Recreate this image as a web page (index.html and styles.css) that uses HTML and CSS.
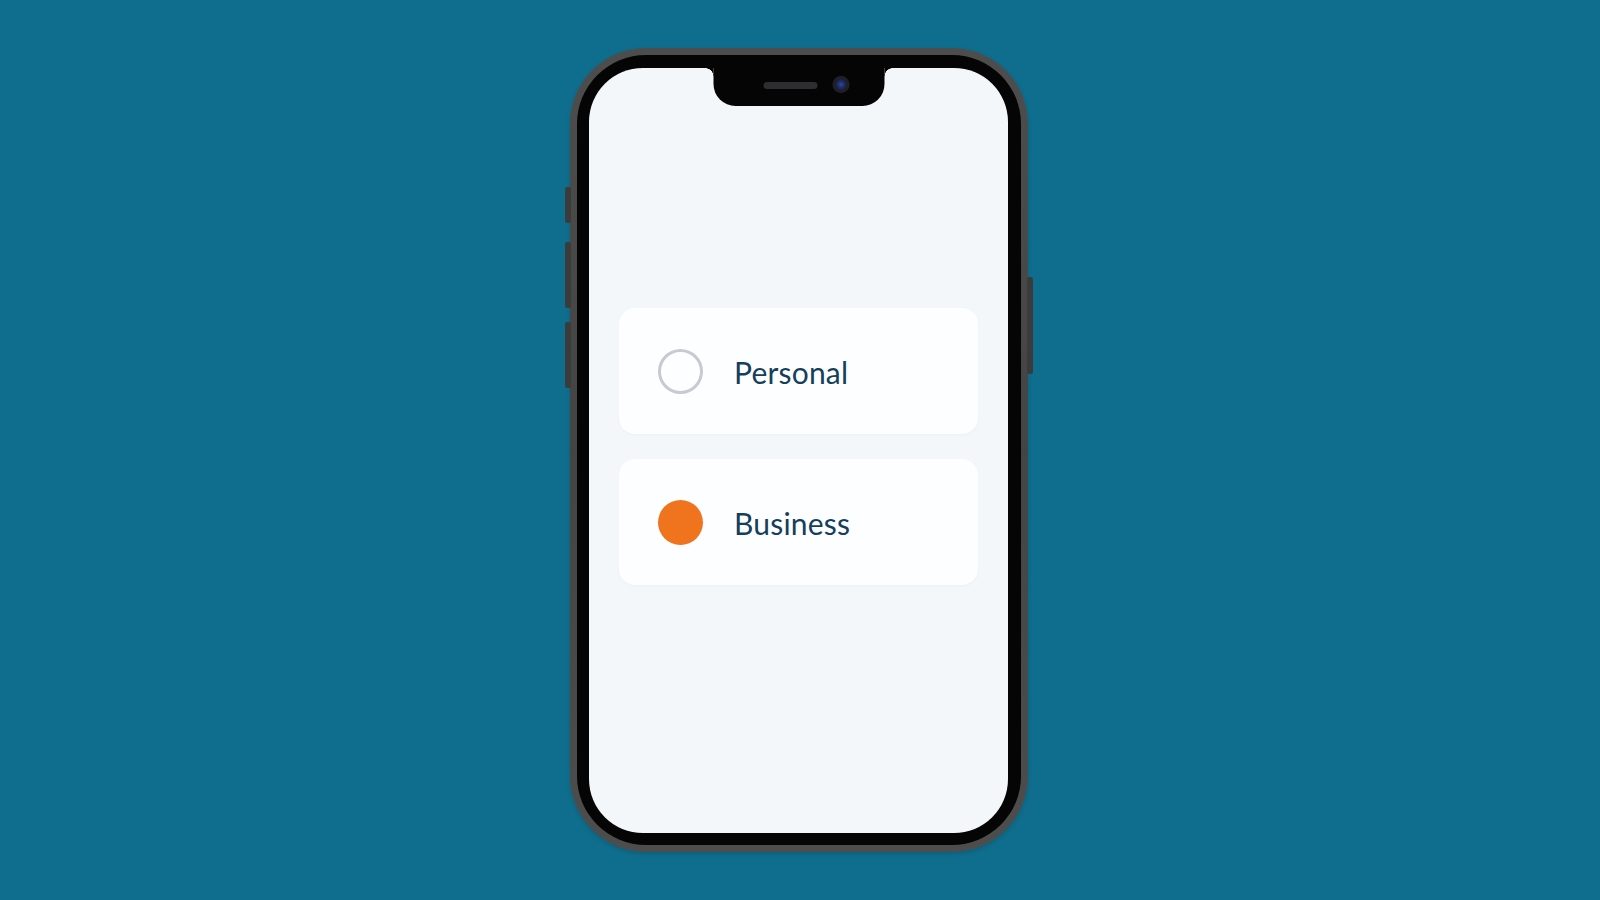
FILE: index.html
```html
<!DOCTYPE html>
<html lang="en">
<head>
<meta charset="utf-8">
<title>Account type</title>
<link rel="stylesheet" href="styles.css">
</head>
<body>
<div class="stage">
  <div class="phone">
    <span class="btn btn-silent"></span>
    <span class="btn btn-vol-up"></span>
    <span class="btn btn-vol-down"></span>
    <span class="btn btn-power"></span>
    <div class="bezel">
      <div class="screen">
        <div class="notch">
          <span class="speaker"></span>
          <span class="camera"></span>
        </div>
        <div class="options">
          <div class="option">
            <span class="radio"></span>
            <span class="label">Personal</span>
          </div>
          <div class="option">
            <span class="radio radio-on"></span>
            <span class="label">Business</span>
          </div>
        </div>
      </div>
    </div>
  </div>
</div>
</body>
</html>
```
FILE: styles.css
```css
* { box-sizing: border-box; }
html, body { margin: 0; padding: 0; }
body {
  background: #0f6e8d;
  font-family: Lato, "Noto Sans", sans-serif;
  width: 1600px;
  height: 900px;
  overflow: hidden;
}
.stage {
  height: 900px;
  display: flex;
  align-items: center;
  justify-content: center;
  padding-right: 2px;
}
.phone {
  position: relative;
  width: 458px;
  height: 804px;
  padding: 7px;
  border-radius: 76px;
  background: linear-gradient(180deg, #4e4d4e 0%, #454445 50%, #4e4d4e 100%);
  box-shadow: 0 2px 4px rgba(0, 0, 0, 0.15);
}
.bezel {
  height: 100%;
  padding: 13px 13px 12px 12px;
  border-radius: 69px;
  background: #050505;
}
.screen {
  position: relative;
  height: 100%;
  border-radius: 54px;
  background: #f4f7fa;
  display: flex;
  align-items: center;
  justify-content: center;
}
.notch {
  position: absolute;
  top: 0;
  left: 50%;
  transform: translateX(-50%);
  width: 171px;
  height: 38px;
  background: #050505;
  border-radius: 0 0 22px 22px;
  display: flex;
  align-items: center;
  justify-content: center;
  gap: 15px;
  padding-left: 16px;
}
.notch::before,
.notch::after {
  content: "";
  position: absolute;
  top: 0;
  width: 8px;
  height: 8px;
}
.notch::before {
  left: -8px;
  background: radial-gradient(circle at 0 100%, transparent 7.5px, #050505 8px);
}
.notch::after {
  right: -8px;
  background: radial-gradient(circle at 100% 100%, transparent 7.5px, #050505 8px);
}
.speaker {
  width: 54px;
  height: 7px;
  border-radius: 4px;
  background: #2e2e30;
  margin-top: -4px;
}
.camera {
  width: 17px;
  height: 17px;
  border-radius: 50%;
  background: radial-gradient(circle, #2a48a8 0, #1f2f6a 3px, #1b1d2c 6px, #232325 8.5px);
  margin-top: -6px;
}
.btn {
  position: absolute;
  width: 6px;
  background: #3c3b3c;
  border-radius: 2px;
}
.btn-silent { left: -5px; top: 139px; height: 36px; }
.btn-vol-up { left: -5px; top: 194px; height: 66px; }
.btn-vol-down { left: -5px; top: 274px; height: 66px; }
.btn-power { right: -5px; top: 229px; height: 97px; }
.options {
  display: flex;
  flex-direction: column;
  gap: 25px;
  margin-top: -8px;
}
.option {
  width: 359px;
  height: 126px;
  border-radius: 16px;
  background: #fdfeff;
  box-shadow: 0 1px 3px rgba(20, 60, 90, 0.04);
  display: flex;
  align-items: center;
  padding-left: 39px;
  gap: 31px;
}
.radio {
  width: 45px;
  height: 45px;
  border-radius: 50%;
  border: 3.5px solid #c6cbd2;
  flex: none;
}
.radio-on {
  border: none;
  background: #f0731e;
}
.label {
  font-size: 30px;
  color: #153f5b;
  letter-spacing: 0.2px;
  padding-top: 2px;
}
```
